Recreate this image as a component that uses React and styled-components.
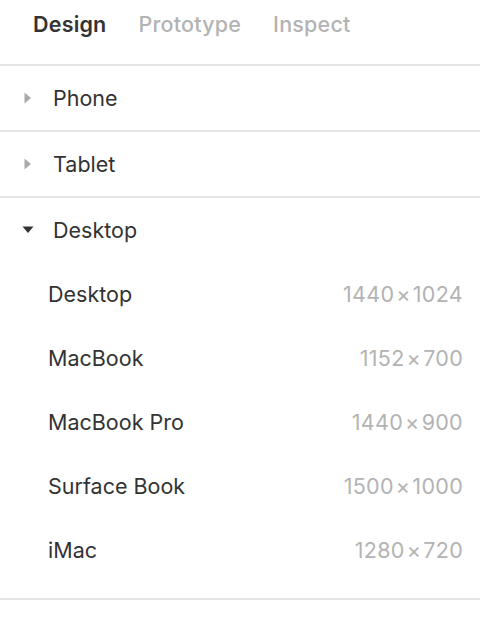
import React from 'react';
import styled, { createGlobalStyle } from 'styled-components'

const GlobalStyle = createGlobalStyle`
  body {
    margin: 0;
    background: #ffffff;
    font-family: Inter, "Noto Sans", sans-serif;
    -webkit-font-smoothing: antialiased;
  }
`

const Panel = styled.div`
  width: 480px;
  display: flex;
  flex-direction: column;
`

const Tabs = styled.div`
  display: flex;
  gap: 32px;
  padding: 10px 33px 26px;
  border-bottom: 2px solid #e6e6e6;
`

const Tab = styled.div`
  font-size: 21.5px;
  line-height: 28px;
  letter-spacing: 0.2px;
  font-weight: ${props => props.active ? 600 : 500};
  color: ${props => props.active ? '#333333' : '#b3b3b3'};
`

const Section = styled.div`
  border-bottom: 2px solid #e6e6e6;
  padding-bottom: ${props => props.open ? '16px' : '0'};
`

const SectionHead = styled.div`
  height: 64px;
  display: flex;
  align-items: center;
  padding-left: 22px;
  font-size: 21.5px;
  color: #333333;
`

const Arrow = styled.span`
  width: 12px;
  height: 12px;
  margin-right: 19px;
  display: flex;
  align-items: center;
  justify-content: center;
`

const Item = styled.div`
  height: 64px;
  display: flex;
  align-items: center;
  justify-content: space-between;
  padding: 0 17px 0 48px;
  font-size: 21.5px;
`

const ItemName = styled.span`
  color: #333333;
`

const ItemSize = styled.span`
  color: #b3b3b3;
  letter-spacing: 0.3px;
`

const Times = styled.span`
  margin: 0 2px;
`

const Caret = ({ open }) => (
  <svg width="12" height="12" viewBox="0 0 12 12">
    {open
      ? <path d="M0.5 2.5 L11.5 2.5 L6 9 Z" fill="#333333" />
      : <path d="M2.5 0.5 L9 6 L2.5 11.5 Z" fill="#aaaaaa" />}
  </svg>
)

const sections = [
  { name: 'Phone', open: false, items: [] },
  { name: 'Tablet', open: false, items: [] },
  {
    name: 'Desktop',
    open: true,
    items: [
      { name: 'Desktop', w: 1440, h: 1024 },
      { name: 'MacBook', w: 1152, h: 700 },
      { name: 'MacBook Pro', w: 1440, h: 900 },
      { name: 'Surface Book', w: 1500, h: 1000 },
      { name: 'iMac', w: 1280, h: 720 }
    ]
  }
]

export default function App() {
  return (
    <Panel>
      <GlobalStyle />
      <Tabs>
        <Tab active>Design</Tab>
        <Tab>Prototype</Tab>
        <Tab>Inspect</Tab>
      </Tabs>
      {sections.map(section => (
        <Section key={section.name} open={section.open}>
          <SectionHead>
            <Arrow><Caret open={section.open} /></Arrow>
            {section.name}
          </SectionHead>
          {section.open && section.items.map(item => (
            <Item key={item.name}>
              <ItemName>{item.name}</ItemName>
              <ItemSize>{item.w}<Times>×</Times>{item.h}</ItemSize>
            </Item>
          ))}
        </Section>
      ))}
    </Panel>
  )
}
